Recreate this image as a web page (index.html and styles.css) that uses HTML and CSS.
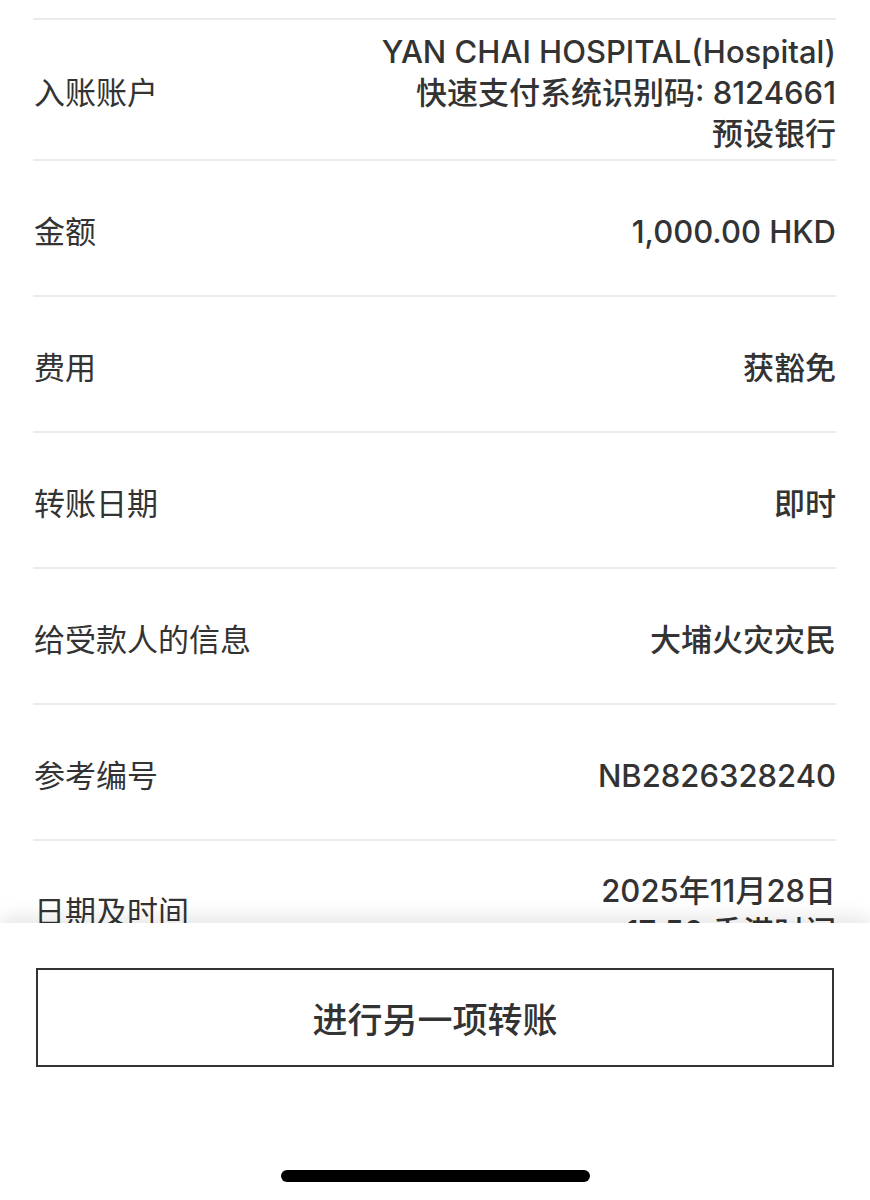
FILE: index.html
```html
<!DOCTYPE html>
<html lang="zh-CN">
  <head>
    <meta charset="UTF-8" />
    <meta name="viewport" content="width=device-width, initial-scale=1.0" />
    <title>转账详情</title>
    <link rel="stylesheet" href="styles.css">
  </head>
  <body>
    <div class="details">
      <div class="row row-tall">
        <div class="label">入账账户</div>
        <div class="value">
          YAN CHAI HOSPITAL(Hospital)<br />
          快速支付系统识别码: 8124661<br />
          预设银行
        </div>
      </div>
      <div class="row">
        <div class="label">金额</div>
        <div class="value">1,000.00 HKD</div>
      </div>
      <div class="row">
        <div class="label">费用</div>
        <div class="value">获豁免</div>
      </div>
      <div class="row">
        <div class="label">转账日期</div>
        <div class="value">即时</div>
      </div>
      <div class="row">
        <div class="label">给受款人的信息</div>
        <div class="value">大埔火灾灾民</div>
      </div>
      <div class="row">
        <div class="label">参考编号</div>
        <div class="value">NB2826328240</div>
      </div>
      <div class="row">
        <div class="label">日期及时间</div>
        <div class="value">
          2025年11月28日<br />
          17:50 香港时间
        </div>
      </div>
    </div>

    <div class="footer">
      <button class="btn">进行另一项转账</button>
      <div class="home-bar"></div>
    </div>
  </body>
</html>
```

FILE: styles.css
```css
body {
  margin: 0;
  font-family: "Inter", "Noto Sans CJK SC", sans-serif;
  color: #333;
  background-color: #fff;
}
.details {
  margin: 18px 34px 0 33px;
  border-top: 2px solid #ebebeb;
}
.row {
  display: flex;
  justify-content: space-between;
  align-items: center;
  box-sizing: border-box;
  min-height: 136px;
  padding-top: 6px;
  border-bottom: 2px solid #ebebeb;
  font-size: 31px;
  line-height: 41px;
}
.row-tall {
  min-height: 141px;
}
.label {
  padding-left: 1px;
}
.value {
  text-align: right;
  font-weight: 500;
}
.footer {
  position: fixed;
  left: 0;
  right: 0;
  bottom: 0;
  height: 277px;
  background-color: #fff;
  box-shadow: 0 -6px 18px rgba(0, 0, 0, 0.1);
  display: flex;
  flex-direction: column;
  align-items: center;
}
.btn {
  margin-top: 45px;
  width: 798px;
  height: 99px;
  box-sizing: border-box;
  border: 2px solid #333;
  background-color: #fff;
  color: #333;
  font-family: "Inter", "Noto Sans CJK SC", sans-serif;
  font-size: 35px;
  font-weight: 500;
}
.home-bar {
  margin-top: 103px;
  width: 309px;
  height: 12px;
  border-radius: 6px;
  background-color: #000;
}
```
